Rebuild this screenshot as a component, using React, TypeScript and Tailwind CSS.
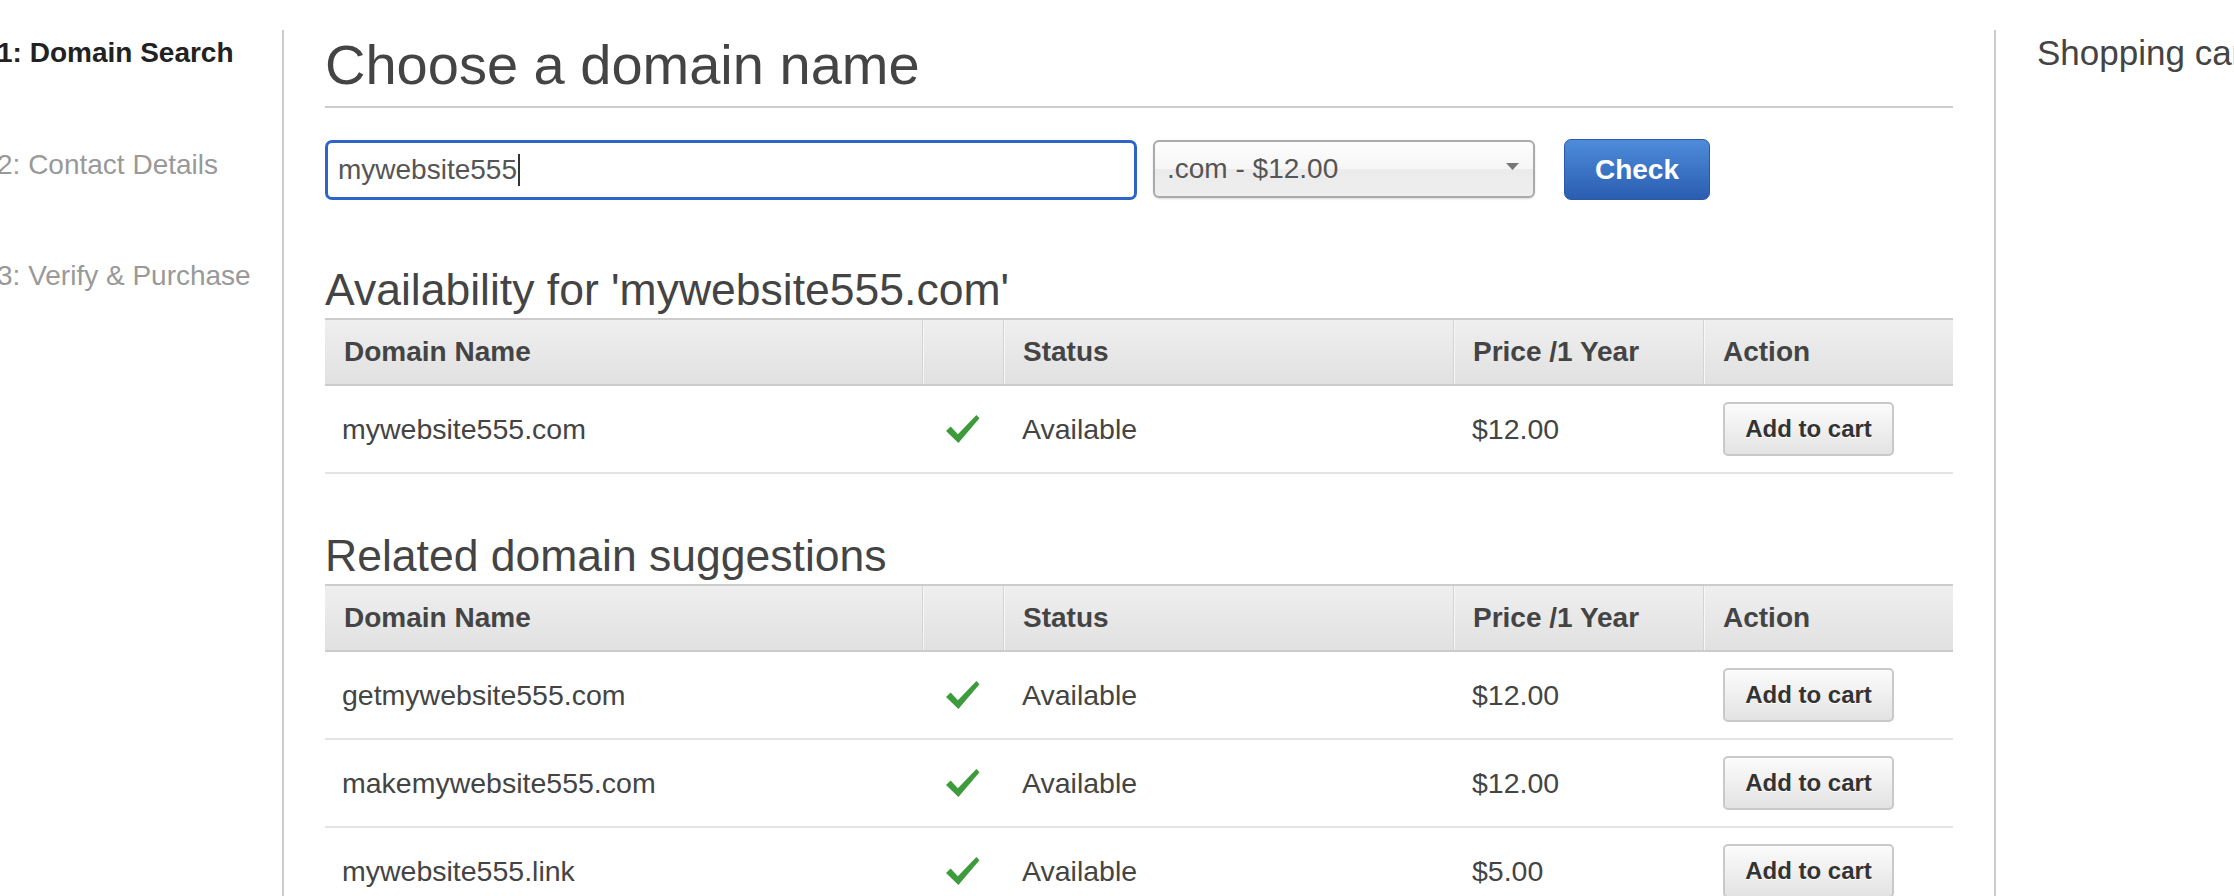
const cols = 'grid grid-cols-[597px_81px_450px_250px_250px]'

type Row = { name: string; price: string }

const primary: Row[] = [{ name: 'mywebsite555.com', price: '$12.00' }]
const related: Row[] = [
  { name: 'getmywebsite555.com', price: '$12.00' },
  { name: 'makemywebsite555.com', price: '$12.00' },
  { name: 'mywebsite555.link', price: '$5.00' },
]

function Check() {
  return (
    <svg width="35" height="30" viewBox="0 0 34 29" className="blur-[0.4px]">
      <path d="M1 16.5 L5.5 12 L12.5 19.5 L30.5 1 L33.5 4 L13 28 Z" fill="#3e9b3b" />
    </svg>
  )
}

function DomainTable({ rows }: { rows: Row[] }) {
  const sep = 'border-l border-l-[#d4d4d4] shadow-[inset_1px_0_0_#f7f7f7]'
  return (
    <div className="mt-[2px]">
      <div className={`${cols} h-[68px] border-y-2 border-[#cccccc] bg-gradient-to-b from-[#efefef] to-[#e1e1e1] text-[28px] font-bold text-[#444]`}>
        <div className="flex items-center pl-[19px]">Domain Name</div>
        <div className={sep} />
        <div className={`flex items-center pl-[19px] ${sep}`}>Status</div>
        <div className={`flex items-center pl-[19px] ${sep}`}>Price /1 Year</div>
        <div className={`flex items-center pl-[19px] ${sep}`}>Action</div>
      </div>
      {rows.map((r) => (
        <div key={r.name} className={`${cols} h-[88px] items-center border-b-2 border-[#e3e3e3] text-[28.5px] text-[#444]`}>
          <div className="pl-[17px]">{r.name}</div>
          <div className="flex justify-center">
            <Check />
          </div>
          <div className="pl-[19px]">Available</div>
          <div className="pl-[19px]">{r.price}</div>
          <div className="pl-[20px]">
            <button className="h-[54px] w-[171px] rounded-[5px] border-2 border-[#c9c9c9] bg-gradient-to-b from-[#fcfcfc] to-[#e3e3e3] text-[24px] font-bold text-[#333] [text-shadow:0_1px_0_#fff]">
              Add to cart
            </button>
          </div>
        </div>
      ))}
    </div>
  )
}

export default function App() {
  const steps = ['1: Domain Search', '2: Contact Details', '3: Verify & Purchase']
  return (
    <div className="h-[896px] w-full overflow-hidden bg-white font-['Liberation_Sans',Arial,sans-serif]">
      <div className="flex h-full pt-[30px]">
        <aside className="w-[284px] shrink-0 border-r-2 border-[#cccccc] pt-[7px]">
          <ul className="-ml-[3px] flex flex-col gap-[79.5px]">
            {steps.map((s, i) => (
              <li
                key={s}
                className={`whitespace-nowrap text-[28px] leading-[32px] ${i === 0 ? 'font-bold text-[#222]' : 'text-[#999]'}`}
              >
                {s}
              </li>
            ))}
          </ul>
        </aside>

        <main className="w-[1712px] shrink-0 border-r-2 border-[#cccccc] px-[41px] pt-[3px]">
          <h1 className="border-b-2 border-[#cccccc] pb-[9px] text-[56px] leading-[64px] text-[#444]">Choose a domain name</h1>

          <div className="mt-[32px] flex h-[60px] items-start">
            <div className="flex h-[60px] w-[812px] items-center rounded-[7px] border-[3px] border-[#2c64c8] pl-[10px] text-[28px] text-[#555]">
              mywebsite555
              <span className="ml-[1px] h-[32px] w-[2px] bg-[#333]" />
            </div>
            <div className="ml-[16px] flex h-[58px] w-[382px] items-center justify-between rounded-[6px] border-2 border-[#aaaaaa] bg-[linear-gradient(#fdfdfd,#f6f6f6_50%,#ebebeb_50%,#eeeeee)] pl-[12px] pr-[14px] text-[28px] text-[#555] shadow-[0_1px_2px_rgba(0,0,0,0.15)]">
              <span>.com - $12.00</span>
              <svg width="13" height="7" viewBox="0 0 13 7" className="-mt-[6px]">
                <path d="M0 0 H13 L6.5 7 Z" fill="#777" />
              </svg>
            </div>
            <button className="-mt-[1px] ml-[29px] h-[61px] w-[146px] rounded-[7px] border border-[#2a5aa6] bg-gradient-to-b from-[#4e8cda] to-[#2b5db0] text-[28px] font-bold text-white">
              Check
            </button>
          </div>

          <h2 className="mt-[64px] text-[44.5px] leading-[52px] text-[#444]">Availability for 'mywebsite555.com'</h2>
          <DomainTable rows={primary} />

          <h2 className="mt-[56px] text-[44.5px] leading-[52px] text-[#444]">Related domain suggestions</h2>
          <DomainTable rows={related} />
        </main>

        <aside className="pl-[41px] pt-[3px]">
          <h3 className="whitespace-nowrap text-[35px] leading-[40px] text-[#444]">Shopping cart</h3>
        </aside>
      </div>
    </div>
  )
}
